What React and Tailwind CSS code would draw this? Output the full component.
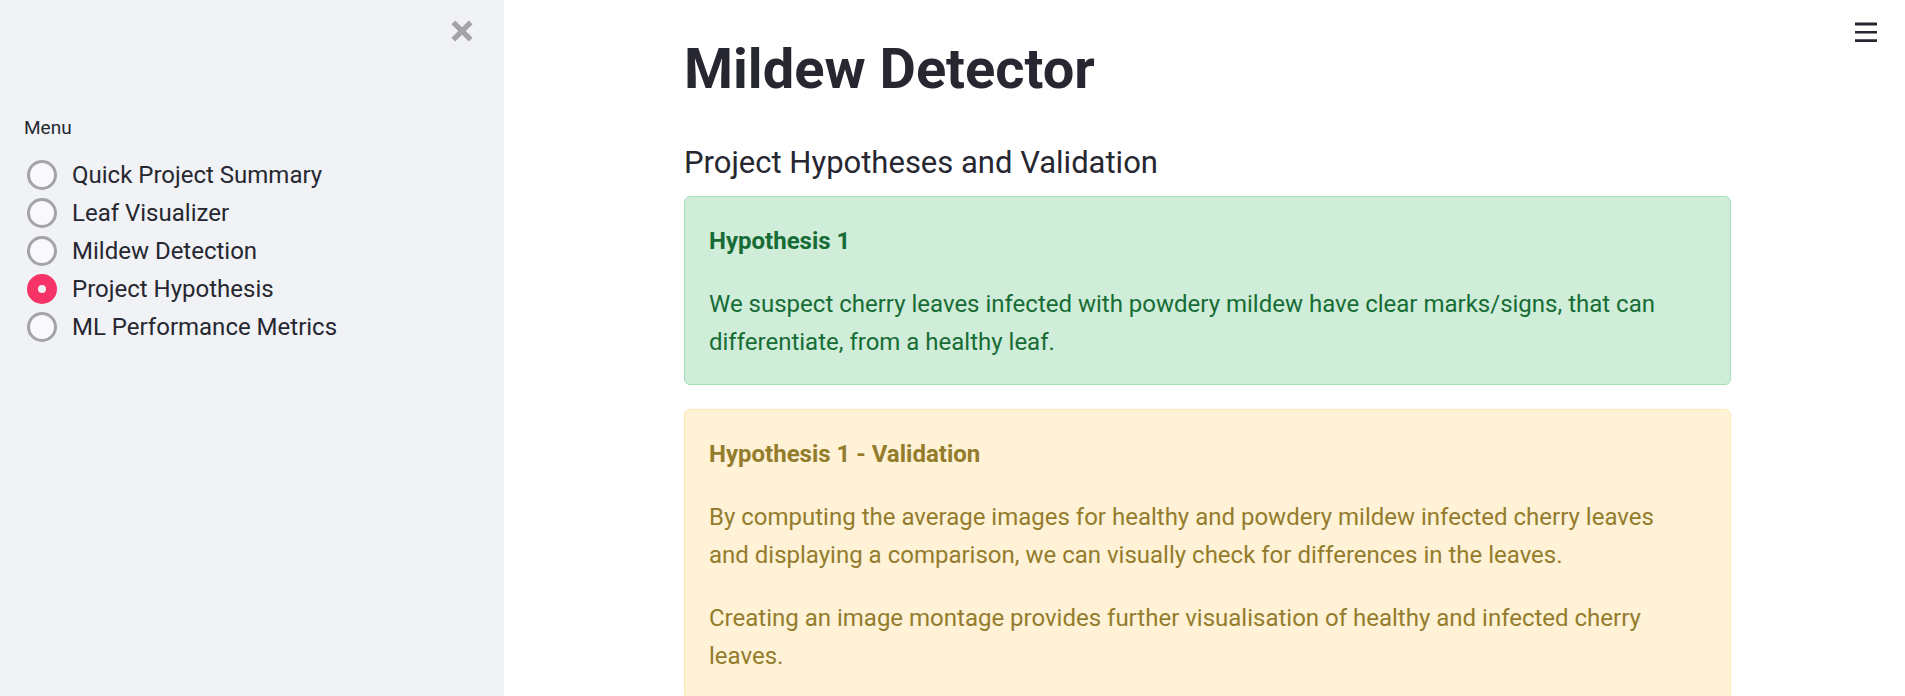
import { useState } from "react";

const pages = [
  "Quick Project Summary",
  "Leaf Visualizer",
  "Mildew Detection",
  "Project Hypothesis",
  "ML Performance Metrics",
];

function Sidebar() {
  const [page, setPage] = useState("Project Hypothesis");
  return (
    <aside className="w-[504px] shrink-0 bg-[#f0f2f6]">
      <div className="flex justify-end px-[31px] pt-5">
        <button type="button" aria-label="Close sidebar" className="text-[#a3a3a8]">
          <svg viewBox="0 0 22 22" className="size-[22px]" fill="currentColor">
            <path d="M4.2 0.4 L11 7.2 L17.8 0.4 L21.6 4.2 L14.8 11 L21.6 17.8 L17.8 21.6 L11 14.8 L4.2 21.6 L0.4 17.8 L7.2 11 L0.4 4.2 Z" />
          </svg>
        </button>
      </div>
      <fieldset className="px-6 pt-[71px]">
        <legend className="contents">
          <span className="block text-[19px] leading-[30px]">Menu</span>
        </legend>
        <div className="pt-[13px]">
          {pages.map((name) => (
            <label key={name} className="flex h-[38px] items-center gap-[15px] pl-[3px]">
              <input
                type="radio"
                name="page"
                checked={page === name}
                onChange={() => setPage(name)}
                className="size-[30px] shrink-0 appearance-none rounded-full border-3 border-[#a3a4aa] bg-[#f9f9fb] checked:border-[11px] checked:border-[#f63366] checked:bg-[#f0f2f6]"
              />
              <span>{name}</span>
            </label>
          ))}
        </div>
      </fieldset>
    </aside>
  );
}

function Notice({ tone, title, children }) {
  return (
    <section className={`flex flex-col gap-[25px] rounded-md border pt-[25px] pr-12 pb-[23px] pl-6 ${tone}`}>
      <h3 className="font-bold">{title}</h3>
      {children}
    </section>
  );
}

export default function App() {
  return (
    <div className="flex h-screen overflow-hidden bg-white font-['Roboto',sans-serif] text-[24px] leading-[38px] text-[#262730]">
      <Sidebar />
      <main className="relative min-w-0 flex-1 overflow-hidden">
        <button type="button" aria-label="Main menu" className="absolute top-[22px] right-7">
          <svg viewBox="0 0 22 20" className="h-5 w-[22px]" fill="currentColor">
            <path d="M0 0.5h22v3H0zM0 9h22v2.6H0zM0 17.3h22v2.7H0z" />
          </svg>
        </button>
        <div className="pl-1.5">
          <div className="mx-auto max-w-[1095px] px-6 pt-8">
            <h1 className="text-[56px] leading-[74px] font-bold">Mildew Detector</h1>
            <h2 className="pt-9 pb-3 text-[31px] leading-[42px] font-normal">
              Project Hypotheses and Validation
            </h2>
            <div className="flex flex-col gap-6">
              <Notice tone="border-[#a3e0b8] bg-[#cfedd8] text-[#176c36]" title="Hypothesis 1">
                <p>
                  We suspect cherry leaves infected with powdery mildew have clear marks/signs, that can
                  differentiate, from a healthy leaf.
                </p>
              </Notice>
              <Notice tone="border-[#ffe8b0] bg-[#fff2d6] text-[#947c2d]" title="Hypothesis 1 - Validation">
                <p>
                  By computing the average images for healthy and powdery mildew infected cherry leaves
                  and displaying a comparison, we can visually check for differences in the leaves.
                </p>
                <p>
                  Creating an image montage provides further visualisation of healthy and infected cherry
                  leaves.
                </p>
              </Notice>
            </div>
          </div>
        </div>
      </main>
    </div>
  );
}
